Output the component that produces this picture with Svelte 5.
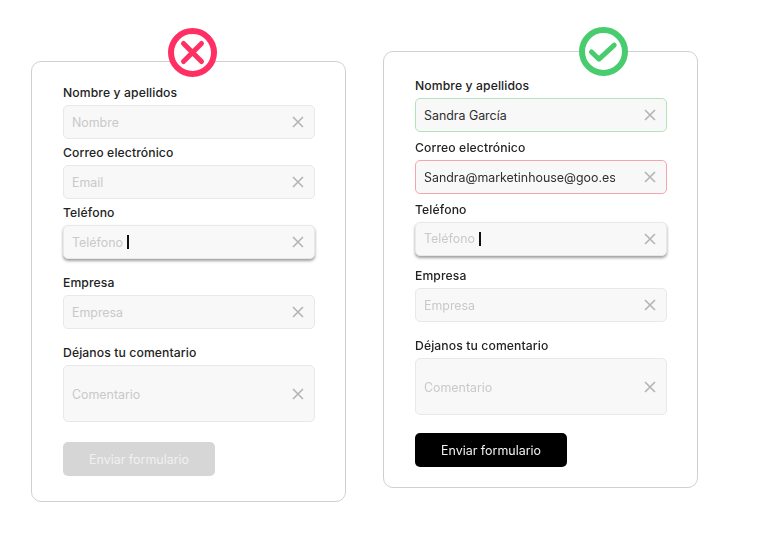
<script lang="ts">
    type Field = { label: string; placeholder?: string; value?: string; state?: string; top: number; tall?: boolean; focus?: boolean };

    const badForm: Field[] = [
        { label: 'Nombre y apellidos', placeholder: 'Nombre', top: 0 },
        { label: 'Correo electrónico', placeholder: 'Email', top: 5 },
        { label: 'Teléfono', placeholder: 'Teléfono', top: 5, focus: true },
        { label: 'Empresa', placeholder: 'Empresa', top: 15 },
        { label: 'Déjanos tu comentario', placeholder: 'Comentario', top: 15, tall: true }
    ];

    const goodForm: Field[] = [
        { label: 'Nombre y apellidos', value: 'Sandra García', state: 'valid', top: 0 },
        { label: 'Correo electrónico', value: 'Sandra@marketinhouse@goo.es', state: 'invalid', top: 7 },
        { label: 'Teléfono', placeholder: 'Teléfono', top: 6.5, focus: true },
        { label: 'Empresa', placeholder: 'Empresa', top: 11.5 },
        { label: 'Déjanos tu comentario', placeholder: 'Comentario', top: 15, tall: true }
    ];
</script>

{#snippet form(fields: Field[])}
    {#each fields as field}
        <div class="field" style:margin-top="{field.top}px">
            <span class="label">{field.label}</span>
            <div class="input {field.state ?? ''}" class:tall={field.tall} class:focus={field.focus}>
                {#if field.value}
                    <span class="value">{field.value}</span>
                {:else}
                    <span class="placeholder">{field.placeholder}</span>
                {/if}
                {#if field.focus}<span class="caret"></span>{/if}
                <svg class="clear" viewBox="0 0 12 12" width="12" height="12">
                    <path d="M1 1L11 11M11 1L1 11" />
                </svg>
            </div>
        </div>
    {/each}
{/snippet}

<main class="page">
    <section class="card bad">
        <svg class="badge" viewBox="0 0 49 49" width="49" height="49">
            <circle cx="24.5" cy="24.5" r="21.5" fill="#fff" stroke="#ff2f63" stroke-width="6" />
            <path d="M15.5 15.5L33.5 33.5M33.5 15.5L15.5 33.5" stroke="#ff2f63" stroke-width="5" stroke-linecap="round" />
        </svg>
        {@render form(badForm)}
        <button class="submit disabled">Enviar formulario</button>
    </section>

    <section class="card good">
        <svg class="badge" viewBox="0 0 49 49" width="49" height="49">
            <circle cx="24.5" cy="24.5" r="21.5" fill="#fff" stroke="#48cc6e" stroke-width="6" />
            <path d="M12.5 25L20 32.2L35.2 18.2" fill="none" stroke="#48cc6e" stroke-width="5" stroke-linecap="round" stroke-linejoin="round" />
        </svg>
        {@render form(goodForm)}
        <button class="submit">Enviar formulario</button>
    </section>
</main>

<style>
    :global(body) {
        background: #fff;
    }

    .page {
        display: flex;
        align-items: flex-start;
        gap: 37px;
        width: 768px;
        height: 545px;
        padding-left: 31px;
        box-sizing: border-box;
        overflow: hidden;
        font-family: Inter, 'Liberation Sans', sans-serif;
        filter: blur(0.35px);
    }

    .card {
        position: relative;
        width: 315px;
        box-sizing: border-box;
        padding: 22px 30px 25px 31px;
        background: #fff;
        border: 1px solid #d0d0d0;
        border-radius: 10px;
    }

    .bad {
        margin-top: 61px;
    }

    .good {
        margin-top: 51px;
        padding-top: 25px;
        padding-bottom: 20px;
    }

    .badge {
        position: absolute;
        top: -34px;
        left: 136px;
    }

    .good .badge {
        top: -25px;
        left: 195px;
    }

    .field {
        display: flex;
        flex-direction: column;
        gap: 4px;
    }

    .label {
        font-size: 12.2px;
        letter-spacing: 0.1px;
        line-height: 17px;
        font-weight: 500;
        color: #232323;
    }

    .input {
        display: flex;
        align-items: center;
        height: 34px;
        box-sizing: border-box;
        padding: 0 10px 0 8px;
        background: #f8f8f8;
        border: 1px solid #e8e8e8;
        border-radius: 5px;
        font-size: 12.4px;
    }

    .input.tall {
        height: 57px;
        padding-top: 1px;
    }

    .input.valid {
        border-color: #b5e3b8;
    }

    .input.invalid {
        border-color: #f7a5ad;
    }

    .input.focus {
        box-shadow: 0 2px 3px rgba(0, 0, 0, 0.38);
    }

    .value {
        color: #2e2e2e;
    }

    .placeholder {
        color: #c9c9c9;
    }

    .caret {
        width: 2px;
        height: 14px;
        margin-left: 4px;
        background: #111;
    }

    .clear {
        margin-left: auto;
        fill: none;
        stroke: #b4b4b4;
        stroke-width: 1.6;
    }

    .submit {
        display: block;
        width: 152px;
        height: 34px;
        margin-top: 20px;
        padding: 0;
        background: #000;
        color: #f2f2f2;
        border: none;
        border-radius: 5px;
        font-family: inherit;
        font-size: 12.45px;
    }

    .good .submit {
        margin-top: 18px;
    }

    .submit.disabled {
        background: #d6d6d6;
        color: #f1f1f1;
    }
</style>
